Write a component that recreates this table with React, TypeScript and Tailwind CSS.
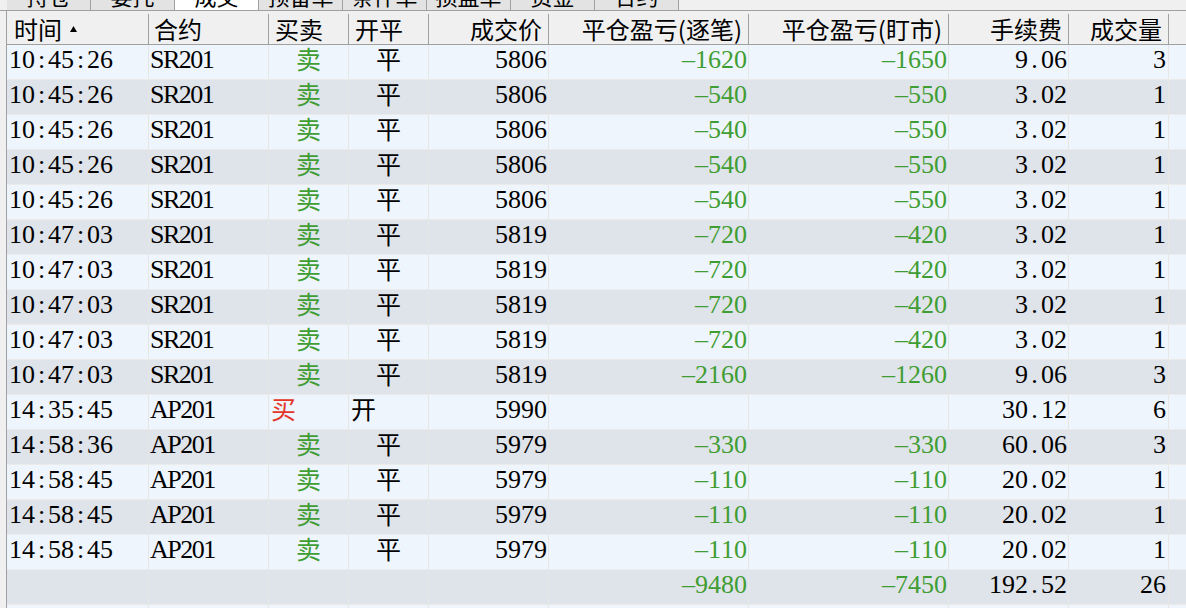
import React from "react";

type Row = string[];

const tabs = ["持仓", "委托", "成交", "预备单", "条件单", "损盈单", "资金", "合约"];

const headers = [
  { label: "时间", cls: "w-[142px] justify-start pl-[7px]", sort: true },
  { label: "合约", cls: "w-[120px] justify-start pl-[5px]" },
  { label: "买卖", cls: "w-[80px] justify-start pl-[6px]" },
  { label: "开平", cls: "w-[80px] justify-start pl-[6px]" },
  { label: "成交价", cls: "w-[120px] justify-end pr-[6px]" },
  { label: "平仓盈亏(逐笔)", cls: "w-[200px] justify-end pr-[6px]" },
  { label: "平仓盈亏(盯市)", cls: "w-[200px] justify-end pr-[6px]" },
  { label: "手续费", cls: "w-[120px] justify-end pr-[6px]" },
  { label: "成交量", cls: "w-[100px] justify-end pr-[6px]" },
];

const sell = (t: string, p: string, a: string, b: string, fee: string, qty: string, c = "SR201"): Row => [t, c, "卖", "平", p, a, b, fee, qty];

const rows: Row[] = [
  sell("10:45:26", "5806", "–1620", "–1650", "9.06", "3"),
  sell("10:45:26", "5806", "–540", "–550", "3.02", "1"),
  sell("10:45:26", "5806", "–540", "–550", "3.02", "1"),
  sell("10:45:26", "5806", "–540", "–550", "3.02", "1"),
  sell("10:45:26", "5806", "–540", "–550", "3.02", "1"),
  sell("10:47:03", "5819", "–720", "–420", "3.02", "1"),
  sell("10:47:03", "5819", "–720", "–420", "3.02", "1"),
  sell("10:47:03", "5819", "–720", "–420", "3.02", "1"),
  sell("10:47:03", "5819", "–720", "–420", "3.02", "1"),
  sell("10:47:03", "5819", "–2160", "–1260", "9.06", "3"),
  ["14:35:45", "AP201", "买", "开", "5990", "", "", "30.12", "6"],
  sell("14:58:36", "5979", "–330", "–330", "60.06", "3", "AP201"),
  sell("14:58:45", "5979", "–110", "–110", "20.02", "1", "AP201"),
  sell("14:58:45", "5979", "–110", "–110", "20.02", "1", "AP201"),
  sell("14:58:45", "5979", "–110", "–110", "20.02", "1", "AP201"),
  ["", "", "", "", "", "–9480", "–7450", "192.52", "26"],
  ["", "", "", "", "", "", "", "", ""],
];

// half-width boxes, like the song-style font of the original grid
function Mono({ s, className = "" }: { s: string; className?: string }) {
  return (
    <span className={`inline-flex font-['Liberation_Serif',serif] text-[26px] ${className}`}>
      {[...s].map((c, i) => (
        <span key={i} className="w-[13px] text-center">
          {c}
        </span>
      ))}
    </span>
  );
}

const cell = "h-full border-r border-[#e6e6e6] flex";
const num = "items-start pt-px leading-[28px]";
const cjk = "items-start leading-[26px] font-['Noto_Sans_CJK_SC',sans-serif] text-[25px]";

function DataRow({ r, i }: { r: Row; i: number }) {
  const bg = i % 2 === 0 ? "bg-[#eff5fd]" : "bg-[#dfe3ea]";
  const isBuy = r[2] === "买";
  return (
    <div className={`flex h-[35px] shrink-0 border-b border-[#ebebeb] text-black ${bg}`}>
      <div className={`${cell} ${num} w-[142px] pl-[2px]`}><Mono s={r[0]} /></div>
      <div className={`${cell} ${num} w-[120px] pl-px font-['Liberation_Serif',serif] text-[26px] tracking-[-1.5px]`}>{r[1]}</div>
      <div className={`${cell} ${cjk} w-[80px] ${isBuy ? "justify-start pl-[2px] text-[#e2352b]" : "justify-center text-[#3f9d33]"}`}>{r[2]}</div>
      <div className={`${cell} ${cjk} w-[80px] ${r[3] === "开" ? "justify-start pl-[2px]" : "justify-center"}`}>{r[3]}</div>
      <div className={`${cell} ${num} w-[120px] justify-end pr-px`}><Mono s={r[4]} /></div>
      <div className={`${cell} ${num} w-[200px] justify-end pr-px text-[#3f9d33]`}><Mono s={r[5]} /></div>
      <div className={`${cell} ${num} w-[200px] justify-end pr-px text-[#3f9d33]`}><Mono s={r[6]} /></div>
      <div className={`${cell} ${num} w-[120px] justify-end pr-px`}><Mono s={r[7]} /></div>
      <div className={`${cell} ${num} w-[100px] justify-end pr-[2px]`}><Mono s={r[8]} /></div>
      <div className="flex-1" />
    </div>
  );
}

export default function App() {
  return (
    <div className="w-[1186px] h-[608px] overflow-hidden bg-[#f0f0f0] flex flex-col font-['Noto_Sans_CJK_SC',sans-serif]">
      {/* tab strip, mostly scrolled off the top */}
      <div className="h-[11px] shrink-0 flex border-b border-[#a0a0a0] pl-[7px]">
        {tabs.map((t) => (
          <div
            key={t}
            className={`w-[84px] h-full overflow-hidden flex justify-center border-r border-[#a0a0a0] ${t === "成交" ? "bg-white" : "bg-[#e3e3e3]"}`}
          >
            <span className="block -mt-[16px] text-[22px] leading-[22px] text-black">{t}</span>
          </div>
        ))}
      </div>

      <div className="flex-1 flex min-h-0">
        <div className="w-[6px] shrink-0" />
        <div className="flex-1 flex flex-col border-l border-[#a0a0a0] min-h-0">
          <div className="h-[34px] shrink-0 flex pt-[3px] border-b border-[#a0a0a0] bg-[#f0f0f0]">
            {headers.map((h) => (
              <div
                key={h.label}
                className={`h-[30px] flex items-center border-r border-[#a0a0a0] text-[24px] leading-[30px] text-black ${h.cls}`}
              >
                {h.label}
                {h.sort && (
                  <svg width="7" height="6" viewBox="0 0 7 6" className="ml-[8px] mb-[1px]">
                    <path d="M3.5 0L7 6H0z" fill="#000" />
                  </svg>
                )}
              </div>
            ))}
            <div className="flex-1" />
          </div>

          <div className="flex-1 flex flex-col overflow-hidden">
            {rows.map((r, i) => (
              <DataRow key={i} r={r} i={i} />
            ))}
          </div>
        </div>
      </div>
    </div>
  );
}
